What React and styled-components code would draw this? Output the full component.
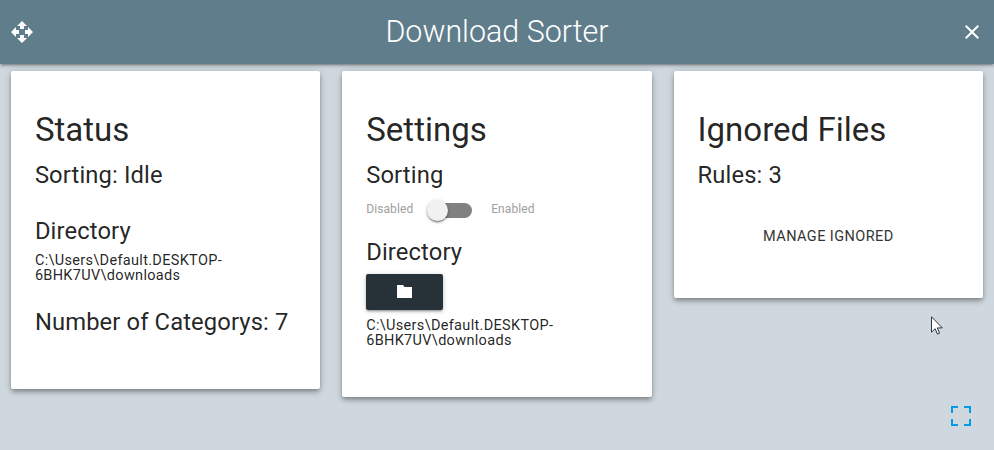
import React from "react";
import styled, { createGlobalStyle } from "styled-components";

const GlobalStyle = createGlobalStyle`
  *, *::before, *::after { box-sizing: border-box; }
  html { font-size: 14.5px; }
  body {
    margin: 0;
    height: 450px;
    overflow: hidden;
    background: #cfd8dc;
    color: rgba(0, 0, 0, 0.87);
    font-family: Roboto, sans-serif;
    line-height: 1.5;
  }
`;

const Page = styled.div`
  position: relative;
  height: 450px;
  background: #cfd8de;
`;

const TitleBar = styled.header`
  display: grid;
  grid-template-columns: 44px 1fr 44px;
  align-items: center;
  height: 64px;
  background: #607d8b;
  color: #fff;
  box-shadow: 0 2px 2px 0 rgba(0, 0, 0, 0.14), 0 3px 1px -2px rgba(0, 0, 0, 0.12),
    0 1px 5px 0 rgba(0, 0, 0, 0.2);
`;

const BarButton = styled.button`
  display: flex;
  justify-content: center;
  padding: 0;
  border: 0;
  background: none;
  color: inherit;
`;

const Brand = styled.h1`
  margin: 0;
  text-align: center;
  font-size: 30.45px;
  font-weight: 300;
  line-height: 64px;
`;

const Icon = styled.svg`
  display: block;
  width: ${(p) => p.$size || 24}px;
  height: ${(p) => p.$size || 24}px;
  fill: currentColor;
`;

const Columns = styled.main`
  display: grid;
  grid-template-columns: repeat(3, 1fr);
  align-items: start;
  gap: 21.75px;
  padding: 7.25px 10.875px;
`;

const Card = styled.section`
  height: ${(p) => p.$height}px;
  padding: 24px;
  border-radius: 2px;
  background: #fff;
  box-shadow: 0 4px 5px 0 rgba(0, 0, 0, 0.14), 0 1px 10px 0 rgba(0, 0, 0, 0.12),
    0 2px 4px -1px rgba(0, 0, 0, 0.3);
`;

const CardTitle = styled.h2`
  margin: 17px 0 14px;
  font-size: 33.06px;
  font-weight: 400;
  line-height: 36px;
`;

const Heading = styled.h3`
  margin: ${(p) => p.$top || 0}px 0 0;
  font-size: 23.78px;
  font-weight: 400;
  line-height: 26px;
  letter-spacing: 0.12px;
  white-space: nowrap;
`;

const Path = styled.p`
  margin: ${(p) => p.$top}px 0 0;
  font-size: 14.5px;
  line-height: 15px;
  letter-spacing: 0.32px;
`;

const SwitchRow = styled.label`
  display: flex;
  align-items: center;
  height: 20px;
  margin-top: 12px;
  color: #9e9e9e;
  font-size: 12px;
  line-height: 18px;
`;

const SwitchLabel = styled.span`
  width: 47px;
  margin-top: -3px;
  letter-spacing: 0.1px;
`;

const Track = styled.span`
  display: flex;
  align-items: center;
  width: 41px;
  height: 15px;
  margin: 1px 19px 0 18px;
  border-radius: 15px;
  background: #818181;
`;

const Thumb = styled.span`
  width: 21px;
  height: 21px;
  margin-left: -4px;
  border-radius: 50%;
  background: #f1f1f1;
  box-shadow: 0 2px 2px 0 rgba(0, 0, 0, 0.14), 0 1px 5px 0 rgba(0, 0, 0, 0.12),
    0 3px 1px -2px rgba(0, 0, 0, 0.2), 0 1px 2px rgba(0, 0, 0, 0.25);
`;

const FolderButton = styled.button`
  display: flex;
  align-items: center;
  justify-content: center;
  width: 77px;
  height: 36px;
  margin-top: 9px;
  padding: 0;
  border: 0;
  border-radius: 2px;
  background: #263238;
  color: #fff;
  box-shadow: 0 2px 2px 0 rgba(0, 0, 0, 0.14), 0 3px 1px -2px rgba(0, 0, 0, 0.12),
    0 1px 5px 0 rgba(0, 0, 0, 0.2);
`;

const FolderIcon = styled.svg`
  display: block;
  width: 15px;
  height: 13px;
  margin-bottom: 1px;
  fill: currentColor;
`;

const FlatButton = styled.button`
  display: block;
  height: 36px;
  margin: 31px auto 0;
  padding: 0;
  border: 0;
  background: none;
  color: #343434;
  font: 400 14.5px/36px Roboto, sans-serif;
  letter-spacing: 0.42px;
  text-transform: uppercase;
`;

const FullscreenButton = styled.button`
  position: absolute;
  right: 23px;
  bottom: 24px;
  padding: 0;
  border: 0;
  background: none;
  color: #039be5;
`;

const Pointer = styled.svg`
  position: absolute;
  left: 931px;
  top: 316px;
  width: 12px;
  height: 19px;
`;

const directory = "C:\\Users\\Default.DESKTOP-6BHK7UV\\downloads";

export default function App() {
  return (
    <Page>
      <GlobalStyle />
      <TitleBar>
        <BarButton aria-label="Move window">
          <Icon viewBox="0 0 24 24">
            <path d="M10 9h4V6h3l-5-5-5 5h3v3zm-1 1H6V7l-5 5 5 5v-3h3v-4zm14 2l-5-5v3h-3v4h3v3l5-5zm-9 3h-4v3H7l5 5 5-5h-3v-3z" />
          </Icon>
        </BarButton>
        <Brand>Download Sorter</Brand>
        <BarButton aria-label="Close">
          <Icon viewBox="0 0 24 24">
            <path d="M19 6.41L17.59 5 12 10.59 6.41 5 5 6.41 10.59 12 5 17.59 6.41 19 12 13.41 17.59 19 19 17.59 13.41 12z" />
          </Icon>
        </BarButton>
      </TitleBar>
      <Columns>
        <Card $height={318}>
          <CardTitle>Status</CardTitle>
          <Heading>Sorting: Idle</Heading>
          <Heading $top={30}>Directory</Heading>
          <Path $top={9}>{directory}</Path>
          <Heading $top={26}>Number of Categorys: 7</Heading>
        </Card>
        <Card $height={326}>
          <CardTitle>Settings</CardTitle>
          <Heading>Sorting</Heading>
          <SwitchRow>
            <SwitchLabel>Disabled</SwitchLabel>
            <Track>
              <Thumb />
            </Track>
            <SwitchLabel>Enabled</SwitchLabel>
          </SwitchRow>
          <Heading $top={19}>Directory</Heading>
          <FolderButton aria-label="Choose directory">
            <FolderIcon viewBox="0 0 15 13">
              <path d="M0 0h6l1.5 2H15v11H0z" />
            </FolderIcon>
          </FolderButton>
          <Path $top={8}>{directory}</Path>
        </Card>
        <Card $height={227}>
          <CardTitle>Ignored Files</CardTitle>
          <Heading>Rules: 3</Heading>
          <FlatButton>Manage Ignored</FlatButton>
        </Card>
      </Columns>
      <Pointer viewBox="0 0 12 19">
        <path
          d="M.5.8v15.4l3.6-3.5 2.3 5.4 2.2-.9-2.3-5.3h5z"
          fill="#fff"
          stroke="#1c2029"
          strokeWidth="0.9"
        />
      </Pointer>
      <FullscreenButton aria-label="Fullscreen">
        <Icon $size={20} viewBox="0 0 20 20">
          <path d="M0 0h7v2H2v5H0zM13 0h7v7h-2V2h-5zM0 13h2v5h5v2H0zM18 13h2v7h-7v-2h5z" />
        </Icon>
      </FullscreenButton>
    </Page>
  );
}
